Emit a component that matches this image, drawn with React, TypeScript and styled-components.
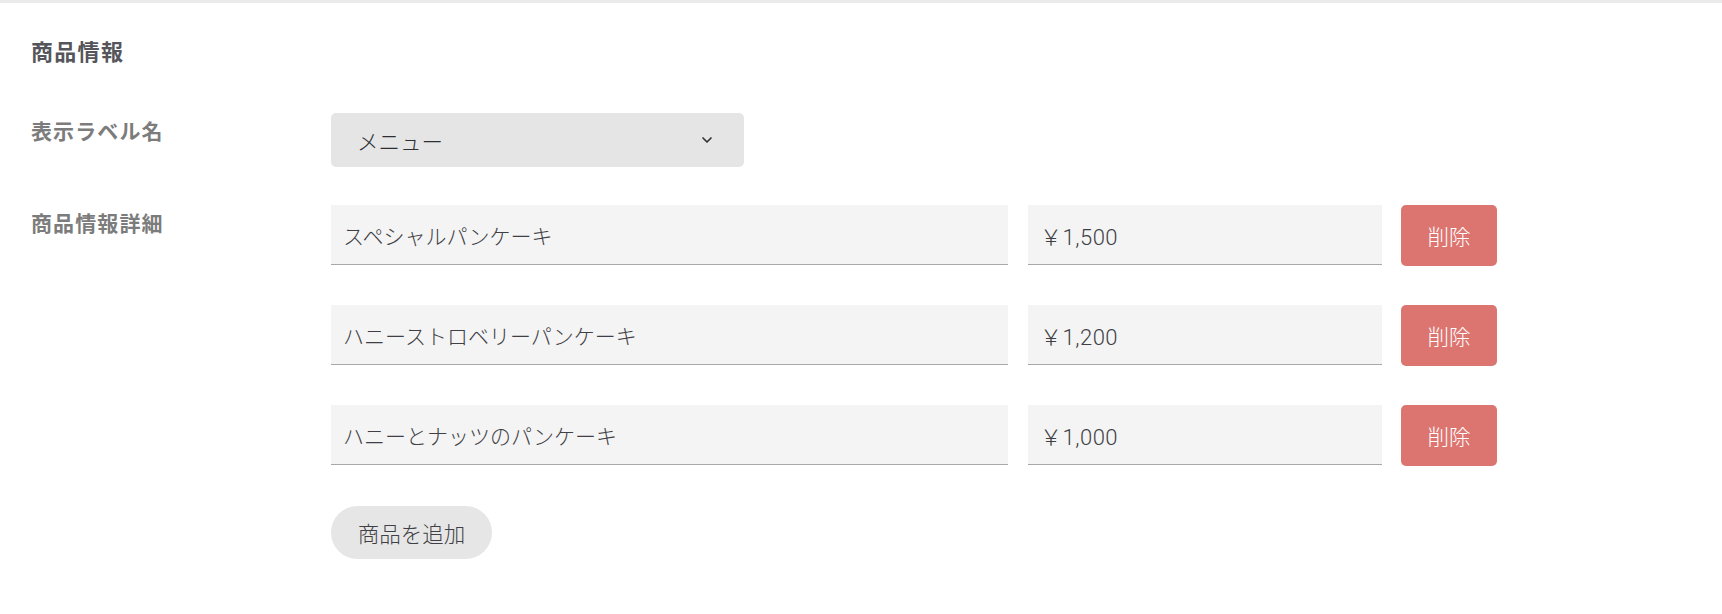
import React, { useState } from 'react';
import styled, { createGlobalStyle } from 'styled-components';

const GlobalStyle = createGlobalStyle`
  html, body {
    margin: 0;
    padding: 0;
    background: #fff;
    font-family: "Noto Sans CJK JP", "Noto Sans", sans-serif;
  }
`;

type Item = { id: number; name: string; price: string };

const initialItems: Item[] = [
  { id: 1, name: 'スペシャルパンケーキ', price: '￥1,500' },
  { id: 2, name: 'ハニーストロベリーパンケーキ', price: '￥1,200' },
  { id: 3, name: 'ハニーとナッツのパンケーキ', price: '￥1,000' },
];

const ChevronDown: React.FC = () => (
  <svg width="12" height="8" viewBox="0 0 12 8" fill="none">
    <path d="M2 2l4 4 4-4" stroke="#333" strokeWidth="1.7" strokeLinecap="round" strokeLinejoin="round" />
  </svg>
);

const App: React.FC = () => {
  const [items, setItems] = useState<Item[]>(initialItems);

  const removeItem = (id: number) => {
    setItems(items.filter(item => item.id !== id));
  };

  const addItem = () => {
    setItems([...items, { id: Date.now(), name: '', price: '' }]);
  };

  return (
    <>
      <GlobalStyle />
      <Page>
        <SectionTitle>商品情報</SectionTitle>

        <FormRow>
          <FieldLabel>表示ラベル名</FieldLabel>
          <SelectBox>
            <span>メニュー</span>
            <ChevronDown />
          </SelectBox>
        </FormRow>

        <FormRow>
          <FieldLabel>商品情報詳細</FieldLabel>
          <ItemList>
            {items.map(item => (
              <ItemRow key={item.id}>
                <TextField $width={677} defaultValue={item.name} />
                <TextField $width={354} $numeric defaultValue={item.price} />
                <DeleteButton onClick={() => removeItem(item.id)}>削除</DeleteButton>
              </ItemRow>
            ))}
            <AddButton onClick={addItem}>商品を追加</AddButton>
          </ItemList>
        </FormRow>
      </Page>
    </>
  );
};

const Page = styled.div`
  border-top: 3px solid #ebebeb;
  padding: 31px 31px 40px;
  min-height: 614px;
  box-sizing: border-box;
`;

const SectionTitle = styled.h2`
  margin: 0 0 46px;
  font-size: 22px;
  line-height: 33px;
  font-weight: 700;
  letter-spacing: 1.3px;
  color: #55555b;
`;

const FormRow = styled.div`
  display: flex;
  align-items: flex-start;
  margin-bottom: 38px;
`;

const FieldLabel = styled.div`
  width: 300px;
  flex-shrink: 0;
  font-size: 21px;
  line-height: 32px;
  font-weight: 700;
  letter-spacing: 1.1px;
  color: #7c7c7c;
  padding-top: 1px;
`;

const SelectBox = styled.div`
  width: 413px;
  height: 54px;
  box-sizing: border-box;
  display: flex;
  align-items: center;
  justify-content: space-between;
  padding: 0 31px 0 26px;
  background: #e5e5e5;
  border-radius: 5px;
  font-size: 21.5px;
  font-weight: 300;
  color: #2f2f33;
`;

const ItemList = styled.div`
  display: flex;
  flex-direction: column;
  align-items: flex-start;
  gap: 39px;
`;

const ItemRow = styled.div`
  display: flex;
  align-items: flex-start;
  gap: 20px;
`;

const TextField = styled.input<{ $width: number; $numeric?: boolean }>`
  width: ${({ $width }) => $width}px;
  height: 60px;
  box-sizing: border-box;
  border: none;
  border-bottom: 1px solid #a8a8a8;
  background: #f4f4f4;
  padding: 0 12px;
  font-family: Roboto, "Noto Sans CJK JP", "Noto Sans", sans-serif;
  font-size: ${({ $numeric }) => ($numeric ? '22px' : '21px')};
  letter-spacing: ${({ $numeric }) => ($numeric ? '0.5px' : '0')};
  font-weight: 300;
  color: #3f3f45;
  outline: none;
`;

const DeleteButton = styled.button`
  width: 96px;
  height: 61px;
  margin-left: -1px;
  border: none;
  border-radius: 5px;
  background: #dc7570;
  color: #ffffff;
  font-family: "Noto Sans CJK JP", "Noto Sans", sans-serif;
  font-size: 21.5px;
  font-weight: 300;
  cursor: pointer;
`;

const AddButton = styled.button`
  margin-top: 1px;
  width: 161px;
  height: 53px;
  border: none;
  border-radius: 27px;
  background: #e6e6e6;
  color: #3f3f45;
  font-family: "Noto Sans CJK JP", "Noto Sans", sans-serif;
  font-size: 21.5px;
  font-weight: 300;
  cursor: pointer;
`;

export default App;
